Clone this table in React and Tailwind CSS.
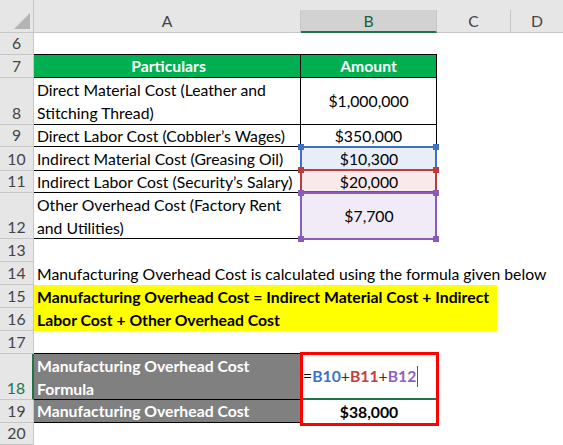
import React from "react";

const hdr = "bg-[#e6e6e6] border-[#c6c6c6]";

const RowHead = ({ n, h, sel }) => (
  <div
    className={`w-[34px] shrink-0 ${h} ${hdr} border-b ${
      sel ? "border-r-2 border-r-[#217346] text-[#217346] bg-[#dadada]" : "border-r text-[#444]"
    } flex items-end justify-center leading-[22px]`}
  >
    {n}
  </div>
);

const Row = ({ n, h, sel, children }) => (
  <div className={`flex ${h}`}>
    <RowHead n={n} h={h} sel={sel} />
    {children}
  </div>
);

const A = ({ className = "", children }) => (
  <div className={`w-[267px] shrink-0 pl-[3px] ${className}`}>{children}</div>
);
const B = ({ className = "", children }) => (
  <div className={`w-[136px] shrink-0 flex items-center justify-center ${className}`}>{children}</div>
);

const Handle = ({ x, y, color }) => (
  <div className={`absolute w-[6px] h-[6px] ${color}`} style={{ left: x - 3, top: y - 3 }} />
);

export default function App() {
  return (
    <div className="relative w-[563px] h-[445px] overflow-hidden bg-white font-[Lato] text-[15.75px] text-black">
      {/* column headers */}
      <div className="flex h-[33px] items-end bg-[#e6e6e6]">
        <div className="w-[34px] h-[33px] shrink-0 border-r border-b border-[#c6c6c6] flex items-end justify-end pr-[3px] pb-[3px]">
          <svg width="16" height="16" viewBox="0 0 16 16">
            <polygon points="0,16 16,16 16,0" fill="#b4b4b4" />
          </svg>
        </div>
        <div className="w-[267px] h-[23px] shrink-0 border-r border-b border-[#c6c6c6] flex items-center justify-center text-[#444]">
          A
        </div>
        <div className="w-[136px] h-[23px] shrink-0 border-r border-[#c6c6c6] border-b-2 border-b-[#217346] bg-[#d2d2d2] flex items-center justify-center text-[#1d5e3a]">
          B
        </div>
        <div className="w-[74px] h-[23px] shrink-0 border-r border-b border-[#c6c6c6] flex items-center justify-center text-[#444]">
          C
        </div>
        <div className="flex-1 h-[23px] border-b border-[#c6c6c6] flex items-center justify-center text-[#444]">
          D
        </div>
      </div>

      <Row n={6} h="h-[22px]">
        <A className="border-b border-black" />
        <B className="border-b border-black" />
      </Row>
      <Row n={7} h="h-[23px]">
        <A className="border-b border-r border-black bg-[#00b050] text-white font-bold flex items-center justify-center">
          Particulars
        </A>
        <B className="border-b border-r border-black bg-[#00b050] text-white font-bold">Amount</B>
      </Row>
      <Row n={8} h="h-[47px]">
        <A className="border-b border-r border-black leading-[23px]">
          <div>Direct Material Cost (Leather and</div>
          <div>Stitching Thread)</div>
        </A>
        <B className="border-b border-r border-black">$1,000,000</B>
      </Row>
      <Row n={9} h="h-[22px]">
        <A className="border-b border-r border-black leading-[22px] whitespace-nowrap">
          Direct Labor Cost (Cobbler’s Wages)
        </A>
        <B className="border-r border-black">$350,000</B>
      </Row>
      <Row n={10} h="h-[24px]">
        <A className="border-b border-black leading-[23px] whitespace-nowrap">Indirect Material Cost (Greasing Oil)</A>
        <B className="bg-[#e8eef8]">$10,300</B>
      </Row>
      <Row n={11} h="h-[22px]">
        <A className="border-b border-black leading-[22px] whitespace-nowrap">Indirect Labor Cost (Security’s Salary)</A>
        <B className="bg-[#f9e9ea]">$20,000</B>
      </Row>
      <Row n={12} h="h-[46px]">
        <A className="border-b border-black leading-[23px]">
          <div>Other Overhead Cost (Factory Rent</div>
          <div>and Utilities)</div>
        </A>
        <B className="bg-[#f0ebf6]">$7,700</B>
      </Row>
      <Row n={13} h="h-[23px]" />
      <Row n={14} h="h-[23px]">
        <A className="leading-[23px] whitespace-nowrap">
          Manufacturing Overhead Cost is calculated using the formula given below
        </A>
      </Row>
      <div className="flex h-[46px]">
        <div className="flex flex-col">
          <RowHead n={15} h="h-[23px]" />
          <RowHead n={16} h="h-[23px]" />
        </div>
        <div className="w-[463px] bg-[#ffff00] pl-[3px] font-bold leading-[23px] whitespace-nowrap">
          <div>Manufacturing Overhead Cost = Indirect Material Cost + Indirect</div>
          <div>Labor Cost + Other Overhead Cost</div>
        </div>
      </div>
      <Row n={17} h="h-[23px]">
        <A className="border-b border-black" />
      </Row>
      <Row n={18} h="h-[46px]" sel>
        <A className="border-b border-black bg-[#808080] text-white font-bold leading-[23px]">
          <div>Manufacturing Overhead Cost</div>
          <div>Formula</div>
        </A>
        <B className="border-b-2 border-[#217346] !justify-start pl-[2px] font-bold">
          <span className="font-normal">=</span>
          <span className="text-[#3c72c6]">B10</span>
          <span className="font-normal text-[#333]">+</span>
          <span className="text-[#c63b3e]">B11</span>
          <span className="font-normal text-[#333]">+</span>
          <span className="text-[#9060c0]">B12</span>
          <span className="ml-[1px] inline-block w-px h-[21px] bg-[#555]" />
        </B>
      </Row>
      <Row n={19} h="h-[23px]">
        <A className="border-b border-black bg-[#808080] text-white font-bold leading-[22px]">
          Manufacturing Overhead Cost
        </A>
        <B className="font-bold">$38,000</B>
      </Row>
      <Row n={20} h="h-[22px]" />

      {/* range highlights */}
      <div className="absolute left-[300px] top-[146px] w-[137px] h-[25px] border-2 border-[#3f6fc6]" />
      <div className="absolute left-[300px] top-[169px] w-[137px] h-[24px] border-2 border-[#c0393b]" />
      <div className="absolute left-[300px] top-[192px] w-[137px] h-[48px] border-2 border-[#8a5bb8]" />
      <Handle x={301} y={147} color="bg-[#3f6fc6]" />
      <Handle x={436} y={147} color="bg-[#3f6fc6]" />
      <Handle x={301} y={170} color="bg-[#c0393b]" />
      <Handle x={436} y={170} color="bg-[#c0393b]" />
      <Handle x={301} y={193} color="bg-[#8a5bb8]" />
      <Handle x={436} y={193} color="bg-[#8a5bb8]" />
      <Handle x={301} y={239} color="bg-[#8a5bb8]" />
      <Handle x={436} y={239} color="bg-[#8a5bb8]" />

      {/* selection outline */}
      <div className="absolute left-[300px] top-[352px] w-[139px] h-[74px] border-[3px] border-[#ff0000]" />
    </div>
  );
}
